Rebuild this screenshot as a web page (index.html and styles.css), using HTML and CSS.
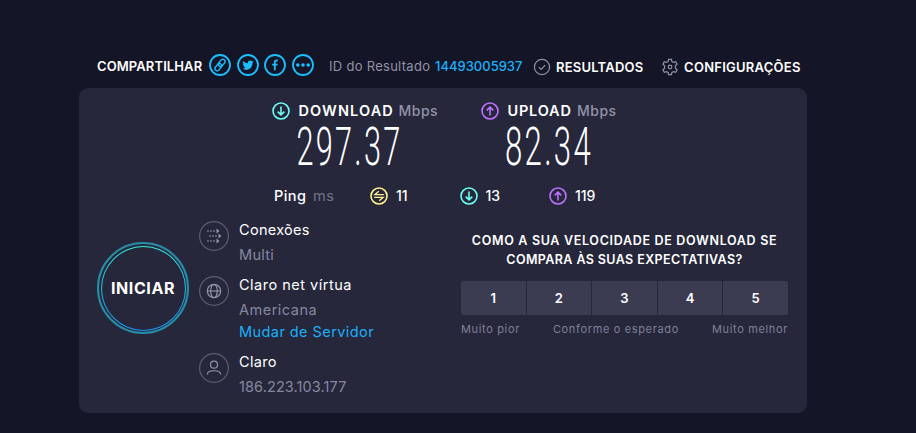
FILE: index.html
```
<!DOCTYPE html>
<html lang="pt">
<head>
<meta charset="utf-8">
<title>Speedtest</title>
<link rel="stylesheet" href="styles.css">
</head>
<body>
<svg class="defs" width="0" height="0">
  <symbol id="down" viewBox="0 0 18 18"><circle cx="9" cy="9" r="8"/><path d="M9 4.6v8M5.7 9.600 9 12.900l3.300-3.300"/></symbol>
  <symbol id="up" viewBox="0 0 18 18"><circle cx="9" cy="9" r="8"/><path d="M9 13.400v-8M5.700 8.400 9 5.100l3.300 3.300"/></symbol>
</svg>
<header class="topbar">
  <span class="share-label">COMPARTILHAR</span>
  <div class="share">
    <svg viewBox="0 0 22 22"><circle cx="11" cy="11" r="10"/><g class="link" transform="rotate(-50 11 11)"><rect x="4.300" y="8.800" width="8" height="4.600" rx="2.300"/><rect x="9.700" y="8.600" width="8" height="4.600" rx="2.300"/></g></svg>
    <svg viewBox="0 0 22 22"><circle cx="11" cy="11" r="10"/><path class="solid" d="M16.6 7.5c-.4.2-.9.3-1.3.4.5-.3.8-.7 1-1.3-.4.3-.9.5-1.5.6a2.3 2.3 0 0 0-3.9 2.1A6.500 6.500 0 0 1 6.100 6.900a2.300 2.300 0 0 0 .7 3.100c-.4 0-.7-.1-1-.3 0 1.100.8 2.100 1.800 2.300-.3.1-.7.1-1 0 .3.900 1.100 1.600 2.100 1.600a4.700 4.700 0 0 1-3.400 1c5 3 10.200-.1 10.200-5.900.4-.3.800-.7 1.100-1.200z"/></svg>
    <svg viewBox="0 0 22 22"><circle cx="11" cy="11" r="10"/><path class="solid" d="M9.900 16.300v-4.700H8.200V9.700h1.700V8.200c0-1.700 1-2.600 2.500-2.600h1.300v1.800h-1c-.7 0-1 .3-1 1v1.300h2l-.3 1.900h-1.700v4.700z"/></svg>
    <svg viewBox="0 0 22 22"><circle cx="11" cy="11" r="10"/><g class="solid"><circle cx="5.800" cy="11" r="1.800"/><circle cx="11" cy="11" r="1.800"/><circle cx="16.200" cy="11" r="1.800"/></g></svg>
  </div>
  <span class="result-label">ID do Resultado</span>
  <a class="result-id">14493005937</a>
  <div class="nav results">
    <svg viewBox="0 0 18 18"><circle cx="9" cy="9" r="7.600"/><path d="m5.900 9.200 2.200 2.200 4.200-4.300"/></svg>
    <span>RESULTADOS</span>
  </div>
  <div class="nav settings">
    <svg viewBox="0 0 18 18"><path d="M7.600 1.300h2.800l.5 2.200 1.600.9 2.200-.7 1.400 2.500-1.700 1.500v2.600l1.700 1.500-1.400 2.500-2.200-.7-1.600.9-.5 2.200H7.600l-.5-2.200-1.600-.9-2.200.7-1.400-2.500 1.700-1.500V7.700L1.900 6.200l1.400-2.500 2.200.7 1.600-.9z"/><circle cx="9" cy="9" r="1.800"/></svg>
    <span>CONFIGURAÇÕES</span>
  </div>
</header>

<main class="card">
  <section class="speeds">
    <div class="speed">
      <div class="speed-head"><svg class="ic teal"><use href="#down"/></svg><b class="dl">DOWNLOAD</b><span>Mbps</span></div>
      <svg class="value" width="140" height="50"><text x="24.500" y="43.800" textLength="106" lengthAdjust="spacingAndGlyphs">297.37</text></svg>
    </div>
    <div class="speed">
      <div class="speed-head"><svg class="ic purple"><use href="#up"/></svg><b class="ul">UPLOAD</b><span>Mbps</span></div>
      <svg class="value" width="140" height="50"><text x="24" y="43.800" textLength="88" lengthAdjust="spacingAndGlyphs">82.34</text></svg>
    </div>
  </section>

  <section class="pings">
    <span class="ping">Ping</span><span class="ms">ms</span>
    <div class="stat"><svg class="ic yellow" viewBox="0 0 18 18"><circle cx="9" cy="9" r="8"/><path d="M13.800 7.700H4.800l4-3.500M4.200 10.300h9l-4 3.500"/></svg><b>11</b></div>
    <div class="stat"><svg class="ic teal"><use href="#down"/></svg><b>13</b></div>
    <div class="stat"><svg class="ic purple"><use href="#up"/></svg><b>119</b></div>
  </section>

  <section class="body">
    <button class="start"><span>INICIAR</span></button>
    <div class="info">
      <div class="item">
        <svg viewBox="0 0 30 30"><circle class="ring" cx="15" cy="15" r="14.400"/><g class="dots"><path d="M8 10h9M10 15h9M8 20h9"/></g><path class="heads" d="m17.500 7.500 3 2.500-3 2.500zM19.500 12.500l3 2.500-3 2.500zM17.500 17.500l3 2.500-3 2.500z"/></svg>
        <div><h3>Conexões</h3><p>Multi</p></div>
      </div>
      <div class="item">
        <svg viewBox="0 0 30 30"><circle class="ring" cx="15" cy="15" r="14.400"/><circle cx="15" cy="15" r="6.700"/><ellipse cx="15" cy="15" rx="3.300" ry="6.700"/><path d="M8.300 15h13.400"/></svg>
        <div><h3 class="isp">Claro net vírtua</h3><p class="city">Americana</p><a class="change">Mudar de Servidor</a></div>
      </div>
      <div class="item">
        <svg viewBox="0 0 30 30"><circle class="ring" cx="15" cy="15" r="14.400"/><circle cx="15" cy="11.700" r="3.500"/><path d="M8.300 21.500c0-5 13.400-5 13.400 0"/></svg>
        <div><h3>Claro</h3><p class="ip">186.223.103.177</p></div>
      </div>
    </div>
    <div class="survey">
      <h2><span class="q1">COMO A SUA VELOCIDADE DE DOWNLOAD SE</span><br><span class="q2">COMPARA ÀS SUAS EXPECTATIVAS?</span></h2>
      <div class="scale"><button>1</button><button>2</button><button>3</button><button>4</button><button>5</button></div>
      <div class="legend"><span>Muito pior</span><span>Conforme o esperado</span><span>Muito melhor</span></div>
    </div>
  </section>
</main>
</body>
</html>
```
FILE: styles.css
```
* { box-sizing: border-box; }
body { margin: 0; height: 433px; overflow: hidden; background: #141526; color: #fff; font-family: Inter, sans-serif; font-size: 14.5px; }
svg { display: block; flex: none; fill: none; stroke: currentColor; }
.defs { position: absolute; }
h2, h3, p { margin: 0; font-weight: 400; }
button { padding: 0; border: 0; color: #fff; font-family: inherit; }

.topbar { display: flex; align-items: center; height: 88px; padding: 45px 0 0 97px; font-size: 13px; white-space: nowrap; }
.share-label { width: 112px; margin-bottom: 2px; font-weight: 600; letter-spacing: .1px; }
.share { display: flex; gap: 5.7px; margin-bottom: 3px; color: #1cbffe; }
.share svg { width: 22px; height: 22px; stroke-width: 1.8; }
.share .link { stroke-width: 1.4; }
.solid { fill: currentColor; stroke: none; }
.result-label { width: 106px; margin: 0 0 2px 15px; color: #9193a8; letter-spacing: .28px; }
.result-id { width: 98px; margin-bottom: 2px; color: #1cb0f8; font-weight: 500; }
.nav { display: flex; align-items: center; gap: 5px; margin-top: 1px; font-weight: 600; letter-spacing: .2px; }
.nav svg { width: 18px; height: 18px; color: #9193a8; stroke-width: 1.2; }
.results { width: 128px; }
.settings { letter-spacing: .25px; }

.card { width: 728px; height: 325px; margin-left: 79px; padding-top: 13px; background: #26273b; border-radius: 9px; }
.ic { width: 18px; height: 18px; stroke-width: 1.6; }
.teal { color: #6afff3; }
.purple { color: #bf71ff; }
.yellow { color: #fff38e; }
.yellow path { stroke-width: 1.3; }

.speeds { display: grid; grid-template-columns: 209px 209px; padding-left: 193px; }
.speed-head { display: flex; align-items: center; height: 20px; }
.speed-head b { margin: 0 0 1px 8.5px; font-weight: 600; }
.dl { width: 100px; letter-spacing: 1.1px; }
.ul { width: 69.500px; letter-spacing: .8px; }
.speed-head span { margin-bottom: 1px; color: #9193a8; font-size: 14px; font-weight: 500; letter-spacing: .5px; }
.value { font-family: Roboto, sans-serif; font-size: 54.500px; font-weight: 300; letter-spacing: 4px; }
.value text { fill: #fff; stroke: none; }

.pings { display: flex; align-items: center; height: 20px; margin: 15px 0 0 195px; }
.ping { width: 39px; margin-bottom: 1.500px; font-weight: 500; letter-spacing: .4px; }
.ms { width: 57px; margin-bottom: 1.500px; color: #73758c; letter-spacing: .5px; }
.stat { display: flex; align-items: center; gap: 8px; width: 89.500px; font-size: 14px; }
.stat b { margin-bottom: 1.500px; font-weight: 500; }

.body { display: flex; padding-left: 18px; }
.start { display: grid; place-items: center; width: 92px; height: 92px; margin-top: 36px; padding: 1.500px; border: 2px solid #278ca5; border-radius: 50%; background: none; }
.start span { display: grid; place-items: center; width: 100%; height: 100%; border: 1.500px solid transparent; border-radius: 50%; background: linear-gradient(#26273b, #26273b) padding-box, linear-gradient(#35f0d8, #1cb4f0 60%, #2194ff) border-box; font-size: 16px; font-weight: 700; letter-spacing: .6px; }
.info { width: 262px; margin: 11px 0 0 10px; }
.item { display: flex; gap: 10px; margin-bottom: 5px; white-space: nowrap; }
.item svg { width: 30px; height: 30px; margin-top: 4px; color: #9193a8; stroke-width: 1.2; }
.item .ring { stroke: #5d5e74; }
.dots { stroke-dasharray: 2 1; }
.heads { fill: currentColor; stroke: none; }
h3, .item p { font-size: 14.5px; line-height: 25px; letter-spacing: .3px; }
.item p { color: #8587a0; }
.item .isp, .item .city { letter-spacing: .5px; }
.change { display: block; line-height: 22px; margin-top: -1.500px; color: #1cb0f8; letter-spacing: .43px; margin-bottom: 1.500px; }
.item .ip { letter-spacing: .1px; }

.survey { width: 327px; margin: 25px 0 0; }
h2 { font-size: 12.5px; font-weight: 600; line-height: 19px; text-align: center; white-space: nowrap; }
.q1 { letter-spacing: .68px; }
.q2 { letter-spacing: .4px; }
.scale { display: grid; grid-template-columns: repeat(5, 1fr); gap: 1px; margin-top: 12px; border-radius: 2px; overflow: hidden; }
.scale button { height: 34px; background: #3b3c51; font-size: 13px; font-weight: 600; }
.legend { display: flex; justify-content: space-between; margin-top: 6px; color: #7f8198; font-size: 11px; line-height: 16px; letter-spacing: .65px; }
```
